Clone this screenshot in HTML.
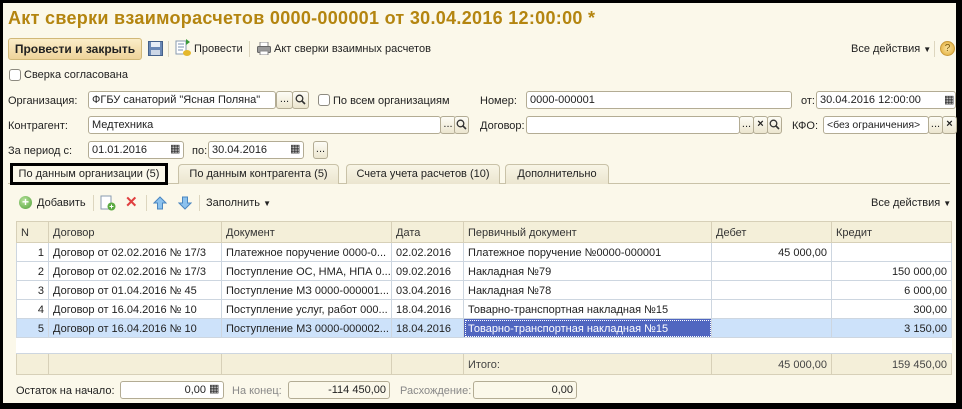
<!DOCTYPE html>
<html><head><meta charset="utf-8"><style>
*{box-sizing:border-box;margin:0;padding:0}
body{width:962px;height:409px;background:#000;position:relative;overflow:hidden;font-family:"Liberation Sans",Arial,sans-serif;font-size:11px;color:#222}
#w{position:absolute;left:3px;top:3px;width:953px;height:400px;background:#fbf8ea}
.a{position:absolute;white-space:nowrap}
.inp{position:absolute;background:#fff;border:1px solid #b3ac94;border-radius:3px;height:18px;line-height:17px;padding-left:3px;overflow:hidden;white-space:nowrap}
.btn{position:absolute;height:18px;border:1px solid #b3ac94;border-radius:3px;background:linear-gradient(#fdfcf5,#ece6cf);text-align:center;line-height:14px;font-size:11px}
.btn svg{margin-top:2px}
.cb{position:absolute;width:12px;height:12px;border:1px solid #8d8a80;border-radius:3px;background:#fff}
.tab{position:absolute;top:164px;height:20px;border:1px solid #c9c2a8;border-bottom:none;border-radius:4px 4px 0 0;background:linear-gradient(#f8f5e6,#ebe5cf);text-align:center;line-height:19px;white-space:nowrap}
table{position:absolute;left:16px;top:221px;width:935px;border-collapse:collapse;table-layout:fixed;background:#fff}
td{border:1px solid #cdd6e0;height:19px;padding:1px 4px 0;white-space:nowrap;overflow:hidden}
tr.h td{background:#f4efd9;height:21px;border-color:#d7d0b8;color:#333}
tr.f td{background:#f4efd9;height:21px;border-color:#d7d0b8;color:#444}
tr.s td{background:#cde2fa}
td.r{text-align:right}
.sep{position:absolute;width:1px;height:16px;background:#ddd6bf}
.g{color:#888}
</style></head><body><div id="w"></div>
<div class="a" style="left:8px;top:8px;font-size:18px;font-weight:bold;color:#b48510;letter-spacing:0.3px">Акт сверки взаиморасчетов 0000-000001 от 30.04.2016 12:00:00 *</div>

<div class="a" style="left:8px;top:38px;width:134px;height:22px;border:1px solid #d1b878;border-radius:3px;background:linear-gradient(#fbedc8,#eed39a);font-weight:bold;text-align:center;line-height:20px;font-size:12px">Провести и закрыть</div>
<svg class="a" style="left:148px;top:41px" width="15" height="15"><rect x="0.5" y="0.5" width="14" height="14" fill="#6a88b5" stroke="#44608a"/><rect x="3" y="1" width="9" height="5" fill="#e8eef6"/><rect x="3" y="9" width="9" height="5" fill="#cdd7e6"/></svg>
<div class="sep" style="left:168px;top:41px"></div>
<svg class="a" style="left:175px;top:39px" width="16" height="18"><rect x="1" y="2" width="10" height="13" fill="#fff" stroke="#8a9bb0"/><path d="M3 5h6M3 8h6M3 11h5" stroke="#7a90b0"/><ellipse cx="12" cy="14" rx="4" ry="3" fill="#e5b82c"/><path d="M11 0l4 3-4 3z" fill="#3a9a3a"/></svg>
<div class="a" style="left:194px;top:43px">Провести</div>
<div class="sep" style="left:249px;top:41px"></div>
<svg class="a" style="left:257px;top:42px" width="14" height="13"><rect x="3" y="0" width="8" height="5" fill="#fff" stroke="#888"/><rect x="0.5" y="4.5" width="13" height="6" rx="1" fill="#9a9a9a" stroke="#666"/><rect x="3" y="9" width="8" height="4" fill="#fff" stroke="#888"/></svg>
<div class="a" style="left:274px;top:43px">Акт сверки взаимных расчетов</div>
<div class="a" style="left:851px;top:43px">Все действия <span style="font-size:8px">▼</span></div>
<div class="sep" style="left:934px;top:41px"></div>
<div class="a" style="left:940px;top:41px;width:15px;height:15px;border-radius:50%;background:radial-gradient(#fbe4a0,#e0a830);border:1px solid #c99a3a;font-size:10px;line-height:13px;text-align:center;color:#7a5a10">?</div>

<div class="cb" style="left:9px;top:69px"></div>
<div class="a" style="left:24px;top:69px">Сверка согласована</div>

<div class="a" style="left:8px;top:95px">Организация:</div>
<div class="inp" style="left:88px;top:91px;width:188px">ФГБУ санаторий "Ясная Поляна"</div>
<div class="btn" style="left:276px;top:91px;width:17px">...</div>
<div class="btn" style="left:292px;top:91px;width:17px"><svg width="11" height="11"><circle cx="4.5" cy="4.5" r="3.3" fill="none" stroke="#333" stroke-width="1.3"/><path d="M7 7l3 3" stroke="#333" stroke-width="1.6"/></svg></div>
<div class="cb" style="left:318px;top:94px"></div>
<div class="a" style="left:333px;top:95px">По всем организациям</div>
<div class="a" style="left:480px;top:95px">Номер:</div>
<div class="inp" style="left:526px;top:91px;width:266px">0000-000001</div>
<div class="a" style="left:801px;top:95px">от:</div>
<div class="inp" style="left:816px;top:91px;width:140px">30.04.2016 12:00:00</div>
<div class="a" style="left:944px;top:93px;font-size:11px">▦</div>

<div class="a" style="left:8px;top:120px">Контрагент:</div>
<div class="inp" style="left:88px;top:116px;width:353px">Медтехника</div>
<div class="btn" style="left:440px;top:116px;width:16px">...</div>
<div class="btn" style="left:454px;top:116px;width:15px"><svg width="11" height="11"><circle cx="4.5" cy="4.5" r="3.3" fill="none" stroke="#333" stroke-width="1.3"/><path d="M7 7l3 3" stroke="#333" stroke-width="1.6"/></svg></div>
<div class="a" style="left:480px;top:120px">Договор:</div>
<div class="inp" style="left:526px;top:116px;width:214px"></div>
<div class="btn" style="left:739px;top:116px;width:15px">...</div>
<div class="btn" style="left:753px;top:116px;width:15px;font-weight:bold">×</div>
<div class="btn" style="left:767px;top:116px;width:15px"><svg width="11" height="11"><circle cx="4.5" cy="4.5" r="3.3" fill="none" stroke="#333" stroke-width="1.3"/><path d="M7 7l3 3" stroke="#333" stroke-width="1.6"/></svg></div>
<div class="a" style="left:792px;top:120px">КФО:</div>
<div class="inp" style="left:823px;top:116px;width:106px;font-size:10.5px">&lt;без ограничения&gt;</div>
<div class="btn" style="left:928px;top:116px;width:15px">...</div>
<div class="btn" style="left:942px;top:116px;width:15px;font-weight:bold">×</div>

<div class="a" style="left:8px;top:145px">За период с:</div>
<div class="inp" style="left:88px;top:141px;width:96px">01.01.2016</div>
<div class="a" style="left:170px;top:142px;font-size:11px">▦</div>
<div class="a" style="left:192px;top:145px">по:</div>
<div class="inp" style="left:208px;top:141px;width:96px">30.04.2016</div>
<div class="a" style="left:290px;top:142px;font-size:11px">▦</div>
<div class="btn" style="left:313px;top:141px;width:15px">...</div>

<div class="a" style="left:8px;top:183px;width:942px;height:1px;background:#c9c2a8"></div>
<div class="tab" style="left:178px;width:161px">По данным контрагента (5)</div>
<div class="tab" style="left:346px;width:154px">Счета учета расчетов (10)</div>
<div class="tab" style="left:505px;width:104px">Дополнительно</div>
<div class="tab" style="left:10px;width:158px;background:#fbf8ea;border:3px solid #000;height:22px;top:163px;line-height:16px;border-radius:0">По данным организации (5)</div>

<div class="a" style="left:19px;top:196px;width:13px;height:13px;border-radius:50%;background:radial-gradient(circle at 40% 35%,#b8e39c,#4e9f36);color:#fff;font-size:12px;line-height:12px;text-align:center;font-weight:bold">+</div>
<div class="a" style="left:37px;top:197px">Добавить</div>
<div class="sep" style="left:93px;top:195px"></div>
<svg class="a" style="left:100px;top:195px" width="16" height="16"><rect x="1" y="1" width="10" height="13" fill="#fff" stroke="#8a9bb0"/><circle cx="11.5" cy="11.5" r="4" fill="#5aaa40"/><path d="M9.5 11.5h4M11.5 9.5v4" stroke="#fff"/></svg>
<div class="a" style="left:125px;top:193px;color:#e04040;font-size:15px;font-weight:bold">✕</div>
<div class="sep" style="left:146px;top:195px"></div>
<svg class="a" style="left:153px;top:196px" width="14" height="14"><path d="M7 1L13 7H9.5V13H4.5V7H1Z" fill="#8cc2ee" stroke="#4a86c0"/></svg>
<svg class="a" style="left:178px;top:196px" width="14" height="14"><path d="M7 13L13 7H9.5V1H4.5V7H1Z" fill="#8cc2ee" stroke="#4a86c0"/></svg>
<div class="sep" style="left:199px;top:195px"></div>
<div class="a" style="left:206px;top:197px">Заполнить <span style="font-size:8px">▼</span></div>
<div class="a" style="left:871px;top:197px">Все действия <span style="font-size:8px">▼</span></div>

<table>
<colgroup><col style="width:32px"><col style="width:173px"><col style="width:170px"><col style="width:72px"><col style="width:248px"><col style="width:120px"><col style="width:120px"></colgroup>
<tr class="h"><td>N</td><td>Договор</td><td>Документ</td><td>Дата</td><td>Первичный документ</td><td>Дебет</td><td>Кредит</td></tr>
<tr><td class="r">1</td><td>Договор от 02.02.2016 № 17/3</td><td>Платежное поручение 0000-0...</td><td>02.02.2016</td><td>Платежное поручение №0000-000001</td><td class="r">45 000,00</td><td></td></tr>
<tr><td class="r">2</td><td>Договор от 02.02.2016 № 17/3</td><td>Поступление ОС, НМА, НПА 0...</td><td>09.02.2016</td><td>Накладная №79</td><td></td><td class="r">150 000,00</td></tr>
<tr><td class="r">3</td><td>Договор от 01.04.2016 № 45</td><td>Поступление МЗ 0000-000001...</td><td>03.04.2016</td><td>Накладная №78</td><td></td><td class="r">6 000,00</td></tr>
<tr><td class="r">4</td><td>Договор от 16.04.2016 № 10</td><td>Поступление услуг, работ 000...</td><td>18.04.2016</td><td>Товарно-транспортная накладная №15</td><td></td><td class="r">300,00</td></tr>
<tr class="s"><td class="r">5</td><td>Договор от 16.04.2016 № 10</td><td>Поступление МЗ 0000-000002...</td><td>18.04.2016</td><td style="background:#5066c0;color:#fff;outline:1px dotted #fff;outline-offset:-2px">Товарно-транспортная накладная №15</td><td></td><td class="r">3 150,00</td></tr>
<tr><td style="height:16px;border-left:none;border-right:none" colspan="7"></td></tr>
<tr class="f"><td></td><td></td><td></td><td></td><td>Итого:</td><td class="r">45 000,00</td><td class="r">159 450,00</td></tr>
</table>

<div class="a" style="left:16px;top:385px">Остаток на начало:</div>
<div class="inp" style="left:120px;top:381px;width:104px;text-align:right;padding-right:17px">0,00</div>
<div class="a" style="left:209px;top:382px;font-size:11px">▦</div>
<div class="a g" style="left:232px;top:385px">На конец:</div>
<div class="inp" style="left:288px;top:381px;width:102px;text-align:right;padding-right:3px;background:#fbf8ea">-114 450,00</div>
<div class="a g" style="left:400px;top:385px">Расхождение:</div>
<div class="inp" style="left:473px;top:381px;width:104px;text-align:right;padding-right:3px;background:#fbf8ea">0,00</div>
</body></html>
